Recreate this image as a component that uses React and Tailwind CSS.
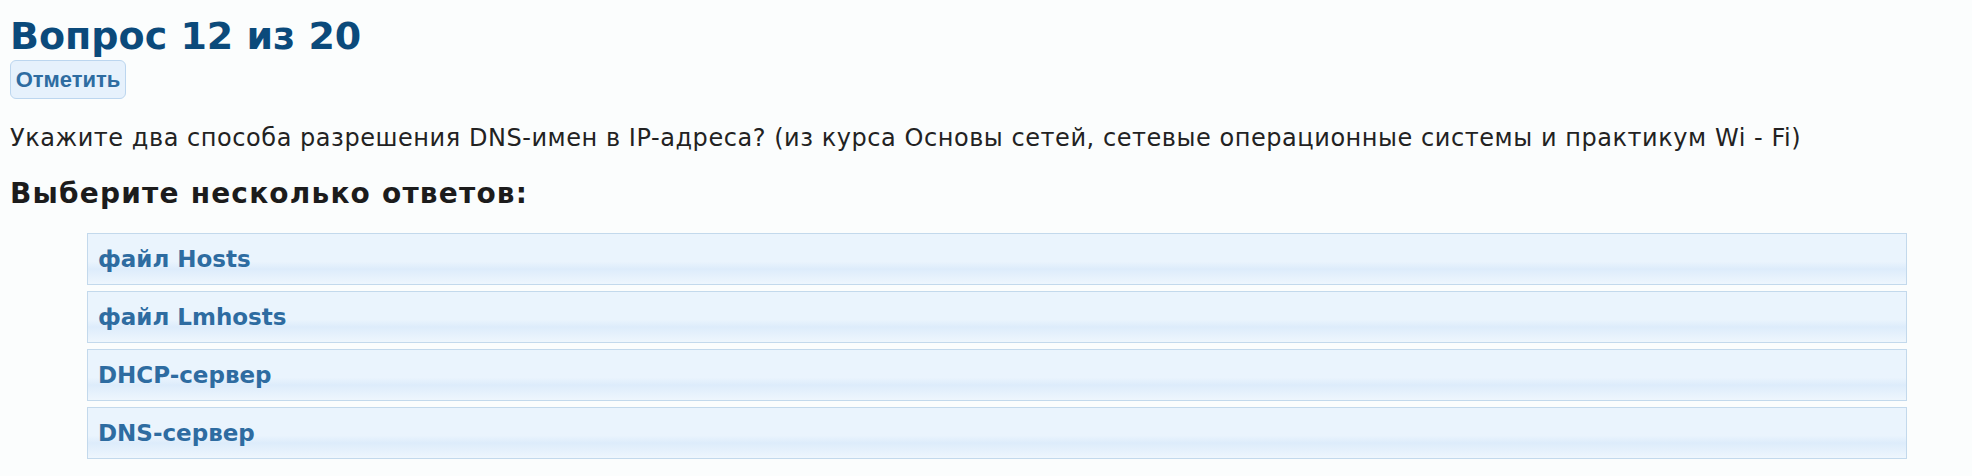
import React from 'react';

const answers = ['файл Hosts', 'файл Lmhosts', 'DHCP-сервер', 'DNS-сервер'];

const font = { fontFamily: '"DejaVu Sans", "Noto Sans", sans-serif' };

const AnswerRow = ({ label }) => (
  <div className="h-[52px] border border-[#c3d9ec] bg-[linear-gradient(to_bottom,#eaf4fd_0%,#eaf4fd_55%,#ddecfb_70%,#eef6fd_100%)] px-[10px] flex items-center cursor-pointer">
    <span className="text-[23px] font-bold text-[#2e6ca1]">{label}</span>
  </div>
);

export default function App() {
  return (
    <div className="min-h-screen bg-[#fbfdfd] px-[10px] pt-[10px]" style={font}>
      <h1 className="text-[38px] leading-[52px] font-semibold text-[#0b4a7b]">Вопрос 12 из 20</h1>
      <button className="-mt-[2px] h-[39px] w-[116px] rounded-[6px] border border-[#bcd6ef] bg-[#e6f1fc] text-[22px] font-bold text-[#2e6ca1]" style={{ fontFamily: '"Liberation Sans", Arial, sans-serif' }}>
        Отметить
      </button>
      <p className="mt-[21px] text-[24px] tracking-[0.55px] text-[#222]">
        Укажите два способа разрешения DNS-имен в IP-адреса? (из курса Основы сетей, сетевые операционные системы и практикум Wi - Fi)
      </p>
      <h2 className="mt-[17px] text-[28px] tracking-[1.2px] font-bold text-[#1c1c1c]">Выберите несколько ответов:</h2>
      <div className="ml-[77px] mr-[55px] mt-[18px] flex flex-col gap-[6px]">
        {answers.map(a => (
          <AnswerRow key={a} label={a} />
        ))}
      </div>
    </div>
  );
}
